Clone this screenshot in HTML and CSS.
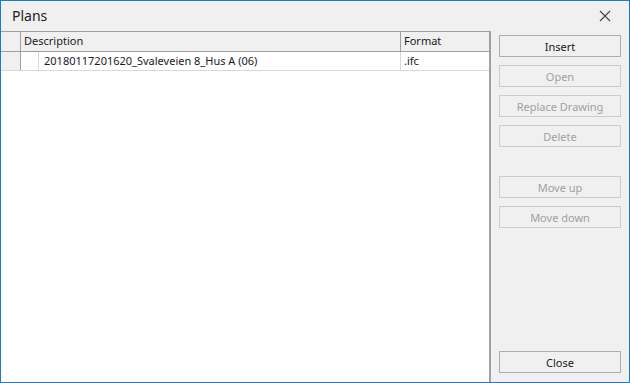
FILE: index.html
```html
<!DOCTYPE html>
<html>
<head>
  <title>Plans</title>
  <link rel="stylesheet" href="styles.css">
</head>
<body>

<div class="window">
  <div class="titlebar">
    <span class="title">Plans</span>
    <span class="close-x">
      <svg width="12" height="12" viewBox="0 0 12 12"><path d="M1 1 L11 11 M11 1 L1 11" stroke="#444" stroke-width="1.1"/></svg>
    </span>
  </div>

  <div class="content">
    <div class="grid">
      <div class="row head">
        <div class="cell rowhead"></div>
        <div class="cell desc">Description</div>
        <div class="cell fmt">Format</div>
      </div>
      <div class="row data">
        <div class="cell rowhead"></div>
        <div class="cell indent"></div>
        <div class="cell desc2">20180117201620_Svaleveien 8_Hus A (06)</div>
        <div class="cell fmt">.ifc</div>
      </div>
    </div>

    <div class="side">
      <button class="btn">Insert</button>
      <button class="btn" disabled>Open</button>
      <button class="btn" disabled>Replace Drawing</button>
      <button class="btn" disabled>Delete</button>
      <button class="btn gap" disabled>Move up</button>
      <button class="btn" disabled>Move down</button>
      <button class="btn bottom">Close</button>
    </div>
  </div>
</div>

</body>
</html>
```

FILE: styles.css
```css
* {
  box-sizing: border-box;
}

body {
  margin: 0;
  font-family: 'Noto Sans', 'Open Sans', sans-serif;
  font-size: 11px;
  color: #1a1a1a;
  background: #f0f0f0;
}

.window {
  width: 630px;
  height: 383px;
  border: 1px solid #1c7bd0;
  background: #f0f0f0;
  display: flex;
  flex-direction: column;
}

.titlebar {
  height: 30px;
  display: flex;
  align-items: center;
  justify-content: space-between;
  padding: 0 18px 0 11px;
}

.title {
  font-size: 14px;
  color: #222;
  margin-top: -1px;
}

.close-x {
  display: flex;
  margin-top: -1px;
}

.content {
  flex: 1;
  display: flex;
}

.grid {
  width: 490px;
  background: #fff;
  border-right: 2px solid #a0a0a0;
}

.row {
  display: flex;
}

.row.head {
  height: 21px;
  background: #f0f0f0;
  border-top: 1px solid #a0a0a0;
  border-bottom: 1px solid #a0a0a0;
}

.row.data {
  height: 19px;
  border-bottom: 1px solid #d8d8d8;
}

.cell {
  height: 100%;
  padding: 0 3px;
  line-height: 18px;
  white-space: nowrap;
}

.rowhead {
  width: 20px;
  background: #f0f0f0;
  border-right: 1px solid #a0a0a0;
}

.desc {
  width: 380px;
  border-right: 1px solid #a0a0a0;
}

.fmt {
  flex: 1;
}

.indent {
  width: 18px;
  border-right: 1px solid #d8d8d8;
}

.desc2 {
  width: 362px;
  padding-left: 5px;
  border-right: 1px solid #d8d8d8;
}

.side {
  flex: 1;
  display: flex;
  flex-direction: column;
  gap: 8px;
  padding: 4px 8px 9px 8px;
}

.btn {
  height: 22px;
  width: 122px;
  font-family: inherit;
  font-size: 11px;
  color: #1a1a1a;
  background: #f0f0f0;
  border: 1px solid #adadad;
  padding: 0;
}

.btn:disabled {
  color: #a0a0a0;
  border-color: #cccccc;
}

.btn.gap {
  margin-top: 21px;
}

.btn.bottom {
  margin-top: auto;
}
```
